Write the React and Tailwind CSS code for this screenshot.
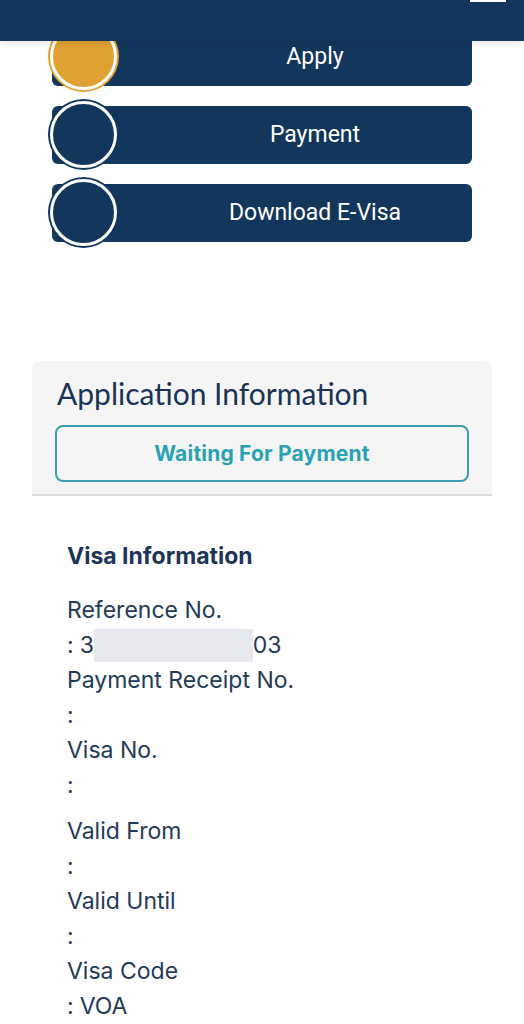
import React from 'react';

const steps = [
  { label: 'Apply', active: true },
  { label: 'Payment' },
  { label: 'Download E-Visa' },
];

const StepRow = ({ label, active }) => {
  const fill = active ? 'bg-[#e0a232]' : 'bg-[#13365d]';
  return (
    <div className="relative h-[58px] mb-[20px]">
      <div className="ml-[52px] mr-[52px] h-full rounded-[6px] bg-[#13365d] flex items-center justify-center pl-[106px]">
        <span className="text-white text-[23px]" style={{ fontFamily: 'Roboto, sans-serif' }}>{label}</span>
      </div>
      <div className={`absolute left-[48px] top-[-7px] w-[71px] h-[71px] rounded-full ${fill} p-[2px]`}>
        <div className={`w-full h-full rounded-full border-[3px] border-white ${fill}`}></div>
      </div>
    </div>
  );
};

const rows = [
  ['Reference No.', 'ref'],
  ['Payment Receipt No.', ''],
  ['Visa No.', '', true],
  ['Valid From', ''],
  ['Valid Until', ''],
  ['Visa Code', 'VOA'],
];

export default function App() {
  return (
    <div className="relative min-h-screen bg-white overflow-hidden" style={{ fontFamily: 'Inter, sans-serif' }}>
      <header className="absolute top-0 left-0 right-0 h-[41px] bg-[#13365d] z-10 shadow-[0_2px_8px_rgba(0,0,0,0.12)]">
        <div className="absolute right-[18px] top-0 w-[36px] h-[2px] bg-white"></div>
      </header>

      <div className="pt-[28px]">
        {steps.map((s) => (
          <StepRow key={s.label} {...s} />
        ))}
      </div>

      <div className="mt-[119px] mx-[32px] rounded-t-[8px] bg-[#f5f5f5] border-b-2 border-[#dcdcdc] px-[23px] pt-[13px] pb-[12px]">
        <h2 className="pl-[2px] text-[30px] text-[#1a3455] leading-[38px]" style={{ fontFamily: 'Lato, sans-serif' }}>
          Application Information
        </h2>
        <div className="mt-[13px] h-[57px] rounded-[8px] border-2 border-[#3b9fb1] flex items-center justify-center">
          <span className="text-[21px] font-bold text-[#27a3b4] tracking-[0.2px]" style={{ fontFamily: 'Inter, sans-serif' }}>
            Waiting For Payment
          </span>
        </div>
      </div>

      <div className="px-[67px] pt-[44px] text-[#233a59]">
        <h3 className="text-[23px] font-bold text-[#1c3557] leading-[32px] mb-[21px]">Visa Information</h3>
        {rows.map(([k, v, gap]) => (
          <div key={k} className={gap ? 'mb-[11px]' : ''}>
            <div className="text-[23px] leading-[35px]">{k}</div>
            <div className="text-[23px] leading-[35px] flex items-center">
              <span>:</span>
              {v === 'ref' ? (
                <>
                  <span className="ml-[6px]">3</span>
                  <span className="inline-block w-[159px] h-[33px] bg-[#e6e9ed]"></span>
                  <span>03</span>
                </>
              ) : v ? (
                <span className="ml-[6px]">{v}</span>
              ) : null}
            </div>
          </div>
        ))}
      </div>
    </div>
  );
}
